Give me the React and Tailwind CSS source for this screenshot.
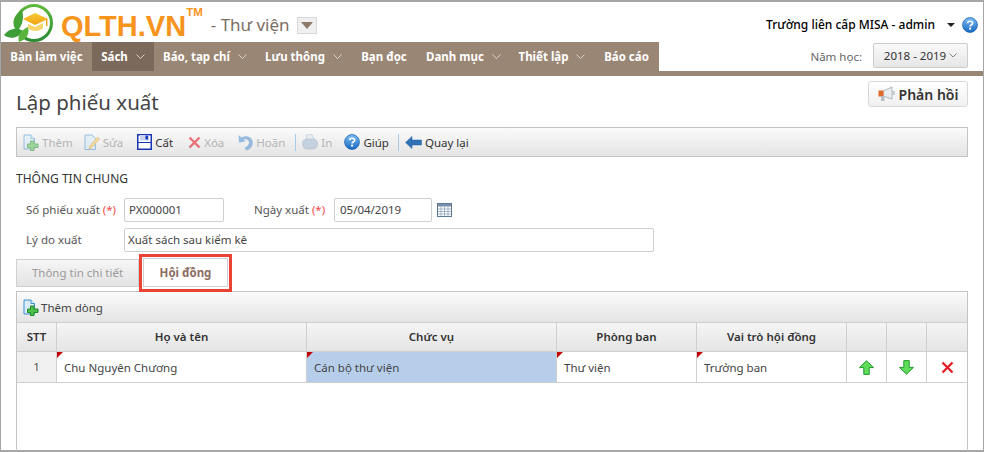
const font = { fontFamily: '"Noto Sans", sans-serif' };

const navItems = [
  { label: "Bàn làm việc", w: "w-[91px]" },
  { label: "Sách", w: "w-[62px]", caret: true, active: true },
  { label: "Báo, tạp chí", w: "w-[102px]", caret: true },
  { label: "Lưu thông", w: "w-[95px]", caret: true },
  { label: "Bạn đọc", w: "w-[66px]" },
  { label: "Danh mục", w: "w-[93px]", caret: true },
  { label: "Thiết lập", w: "w-[84px]", caret: true },
  { label: "Báo cáo", w: "w-[65px]" },
];

const Logo = () => (
  <svg width="53" height="42" viewBox="0 0 53 42">
    <defs>
      <linearGradient id="ring" x1="0" y1="0" x2="0" y2="1">
        <stop offset="0" stopColor="#5fb83c" />
        <stop offset="1" stopColor="#2b8c33" />
      </linearGradient>
      <linearGradient id="cap" x1="0" y1="0" x2="0" y2="1">
        <stop offset="0" stopColor="#f9c933" />
        <stop offset="1" stopColor="#f0a313" />
      </linearGradient>
    </defs>
    <circle cx="32" cy="21" r="17.5" fill="none" stroke="url(#ring)" strokeWidth="3" />
    <path d="M13 27 C9 19 13 12 20 8 C22 15 21 23 16 28 Z" fill="#46a336" />
    <path d="M2 33 C7 26 15 25 21 29 C17 36 8 38 2 33 Z" fill="#3d9d37" />
    <path d="M17 40 C15 33 19 28 26 25 C28 32 24 38 17 40 Z" fill="#5ab43f" />
    <path d="M33 11 L46 17 L33 23 L21 17 Z" fill="url(#cap)" />
    <path d="M26 22 L26 26 C29 30 38 30 41 26 L41 21 L33 25 Z" fill="#f7d56a" />
    <rect x="44" y="17" width="1.4" height="7" fill="#e89b12" />
  </svg>
);

const Caret = () => (
  <svg width="9" height="5" viewBox="0 0 9 5" className="ml-[8px] shrink-0">
    <path d="M0.5 0.5 L4.5 4.5 L8.5 0.5" fill="none" stroke="#e4dcd3" strokeWidth="0.9" />
  </svg>
);

const DocPlus = ({ dim }) => (
  <svg width="16" height="17" viewBox="0 0 16 17" className={dim ? "opacity-50" : ""}>
    <path d="M1 1 H8 L11.5 4.5 V15 H1 Z" fill="#d8ecfa" stroke="#3d8ed0" />
    <path d="M8 1 V4.5 H11.5" fill="#fff" stroke="#3d8ed0" />
    <path d="M7.5 7 H11 V10 H15 V13.5 H11 V16.5 H7.5 V13.5 H4.5 V10 H7.5 Z" fill="#4cc04a" stroke="#1f8a2a" />
  </svg>
);

const DocEdit = () => (
  <svg width="16" height="17" viewBox="0 0 16 17" className="opacity-50">
    <path d="M1 1 H8 L11.5 4.5 V15.5 H1 Z" fill="#d8ecfa" stroke="#3d8ed0" />
    <path d="M5.5 12.5 L13.5 3 L15.5 5 L7.5 14 L5 15 Z" fill="#f3c64a" stroke="#c49422" strokeWidth="0.7" />
  </svg>
);

const Floppy = () => (
  <svg width="15" height="16" viewBox="0 0 15 16">
    <rect x="0.75" y="0.75" width="13.5" height="14.5" fill="#fff" stroke="#1b36b5" strokeWidth="1.5" />
    <rect x="3" y="1" width="9" height="5.5" fill="#c9d4ee" />
    <rect x="8.5" y="1.5" width="2.5" height="4" fill="#1b36b5" />
    <rect x="1" y="8" width="13" height="1" fill="#1b36b5" />
  </svg>
);

const Cross = ({ size = 13, color = "#e3202a" }) => (
  <svg width={size} height={size} viewBox="0 0 13 13">
    <path d="M1.5 1.5 L11.5 11.5 M11.5 1.5 L1.5 11.5" stroke={color} strokeWidth="2.4" />
  </svg>
);

const Undo = () => (
  <svg width="15" height="17" viewBox="0 0 15 17" className="opacity-50">
    <path d="M0.5 1 L1 8.5 L7.5 7.5 L5.5 5.5 C8.5 4.5 11 6 11 8.5 C11 11 9 13 6.5 14 L8.5 16.5 C12.5 15.5 14.8 12 14.8 8.5 C14.8 3.5 9 0.5 3.5 3.5 Z" fill="#3f87cf" />
  </svg>
);

const Printer = () => (
  <svg width="16" height="16" viewBox="0 0 16 16" className="opacity-50">
    <path d="M4 1 L10 0.5 L12 5 L5 6 Z" fill="#dfe8f2" stroke="#8ca3bd" strokeWidth="0.7" />
    <path d="M0.5 9 C0.5 6 3 5 6 5 H11 C14 5 15.5 7 15.5 10 C15.5 13 13.5 15 10.5 15 H5 C2 15 0.5 12 0.5 9 Z" fill="#9fb6d2" stroke="#7f97b5" strokeWidth="0.7" />
  </svg>
);

const Help = ({ size = 16 }) => (
  <svg width={size} height={size} viewBox="0 0 16 16">
    <defs>
      <linearGradient id="helpfill" x1="0" y1="0" x2="0" y2="1">
        <stop offset="0" stopColor="#7fc0f4" />
        <stop offset="1" stopColor="#1667c4" />
      </linearGradient>
    </defs>
    <circle cx="8" cy="8" r="7.4" fill="url(#helpfill)" stroke="#1b5fae" strokeWidth="0.8" />
    <path d="M5.6 6.2 C5.6 3.6 10.6 3.6 10.6 6.2 C10.6 8 8.1 8 8.1 9.6" fill="none" stroke="#fff" strokeWidth="1.7" />
    <rect x="7.1" y="10.6" width="2" height="2" fill="#fff" />
  </svg>
);

const BackArrow = () => (
  <svg width="17" height="13" viewBox="0 0 17 13">
    <path d="M0.5 6.5 L7 0.5 V4 H16.5 V9 H7 V12.5 Z" fill="#2f72b8" stroke="#23609f" strokeWidth="0.5" />
  </svg>
);

const GreenArrow = ({ down }) => (
  <svg width="15" height="15" viewBox="0 0 15 15" className={down ? "rotate-180" : ""}>
    <path d="M7.5 0.8 L14.5 7.6 L10.2 7.6 V14.4 H4.8 V7.6 H0.5 Z" fill="#5fdc5a" stroke="#1e9a28" />
  </svg>
);

const Calendar = () => (
  <svg width="15" height="14" viewBox="0 0 15 14">
    <rect x="0.5" y="0.5" width="14" height="13" fill="#fff" stroke="#5f7896" />
    <rect x="1" y="1" width="13" height="2.5" fill="#7890ad" />
    <path d="M1 6 H14 M1 8.5 H14 M1 11 H14 M4 3.5 V13 M7.5 3.5 V13 M11 3.5 V13" stroke="#8ea3bc" strokeWidth="0.8" />
  </svg>
);

const Megaphone = () => (
  <svg width="18" height="16" viewBox="0 0 18 16">
    <path d="M5 5 L14 1 V13 L5 10 Z" fill="#e9edf0" stroke="#9aa5ad" strokeWidth="0.7" />
    <rect x="0.5" y="4.5" width="5" height="6" fill="#e0692c" />
    <rect x="3" y="10" width="3.5" height="5" fill="#b7c0c6" />
    <rect x="14" y="5" width="3" height="4" fill="#c7ced3" />
  </svg>
);

const ToolButton = ({ icon, label, dim, className = "" }) => (
  <div className={`flex items-center gap-[3px] ${className}`}>
    {icon}
    <span className={`pt-px ${dim ? "text-[#b4b4b4]" : "text-[#333]"}`}>{label}</span>
  </div>
);

const Divider = () => <div className="w-px h-[17px] bg-[#a9cbe6]" />;

const Marker = () => (
  <span className="absolute left-0 top-0 w-0 h-0 border-t-[6px] border-r-[6px] border-t-[#c00000] border-r-transparent" />
);

const HeadCell = ({ children }) => (
  <div className="flex items-center justify-center border-r border-[#cfcfcf] font-semibold text-[#333] last:border-r-0">
    {children}
  </div>
);

const BodyCell = ({ children, marked, className = "" }) => (
  <div className={`relative flex items-center pl-[7px] pt-px border-r border-[#cfcfcf] text-[#444] ${className}`}>
    {marked && <Marker />}
    {children}
  </div>
);

const IconCell = ({ children }) => (
  <div className="flex items-center justify-center border-r border-[#cfcfcf] last:border-r-0">{children}</div>
);

export default function App() {
  const grid = "grid grid-cols-[40px_250px_250px_140px_150px_40px_40px_41px]";
  return (
    <div style={font} className="w-[984px] h-[452px] overflow-hidden bg-white text-[11.5px] text-[#333]">
      <div className="h-[452px] border-t-2 border-l-[1px] border-r-[1px] border-b-[2px] border-[#a6a6a6]">
        {/* HEADER */}
        <div className="h-[40px] flex items-start">
          <div className="ml-[1px]"><Logo /></div>
          <div className="ml-[6px] mt-[6px] text-[#f7941d] font-bold text-[29px] leading-[36px]" style={{ fontFamily: '"Liberation Sans", sans-serif' }}>
            QLTH.VN
          </div>
          <div className="mt-[4px] text-[#f7941d] font-bold text-[11.5px] leading-[12px]" style={{ fontFamily: '"Liberation Sans", sans-serif' }}>
            TM
          </div>
          <div className="ml-[8px] mt-[10px] text-[17px] leading-[26px] text-[#7b6d62]">- Thư viện</div>
          <div className="ml-[7px] mt-[15px] w-[20px] h-[17px] bg-[#f0f0f0] border border-[#d8d8d8] flex items-center justify-center">
            <span className="w-0 h-0 border-x-[6px] border-x-transparent border-t-[7px] border-t-[#8b7a6c]" />
          </div>
          <div className="ml-auto mt-[14px] mr-[5px] flex items-center text-[12px] text-black font-medium">
            <span>Trường liên cấp MISA - admin</span>
            <span className="ml-[12px] mr-[7px] w-0 h-0 border-x-[4px] border-x-transparent border-t-[4px] border-t-[#222]" />
            <Help />
          </div>
        </div>

        {/* NAV */}
        <div className="h-[34px] bg-[#9a8674]">
          <div className="flex h-[29px]">
            {navItems.map((item) => (
              <div
                key={item.label}
                className={`${item.w} flex items-center justify-center font-bold text-white text-[11.5px] ${item.active ? "bg-[#7b6a5b]" : ""}`}
              >
                <span>{item.label}</span>
                {item.caret && <Caret />}
              </div>
            ))}
            <div className="flex-1 bg-white flex items-center justify-end pr-[15px]">
              <span className="text-[#666] mr-[11px]">Năm học:</span>
              <div className="w-[95px] h-[25px] mt-[-2px] flex items-center justify-center whitespace-nowrap bg-gradient-to-b from-[#fafafa] to-[#e6e6e6] border border-[#cccccc] rounded-[2px] text-[#333]">
                2018 - 2019
                <svg width="8" height="5" viewBox="0 0 8 5" className="ml-[3px]">
                  <path d="M0.5 0.5 L4 4 L7.5 0.5" fill="none" stroke="#777" strokeWidth="0.9" />
                </svg>
              </div>
            </div>
          </div>
        </div>

        {/* CONTENT */}
        <div className="px-[15px]">
          <div className="flex items-start justify-between h-[51px]">
            <h1 className="mt-[10px] text-[20.5px] leading-[32px] text-[#444]">Lập phiếu xuất</h1>
            <div className="mt-[5px] w-[100px] h-[26px] flex items-center justify-center gap-[3px] bg-gradient-to-b from-[#fff] to-[#f0f0f0] border border-[#d8d8d8] rounded-[3px] font-semibold text-[14px] text-[#333]">
              <Megaphone />
              <span>Phản hồi</span>
            </div>
          </div>

          {/* TOOLBAR */}
          <div className="h-[30px] flex items-center pl-[6px] border border-[#c4c4c4] bg-gradient-to-b from-[#fbfbfb] to-[#e4e4e4]">
            <ToolButton icon={<DocPlus dim />} label="Thêm" dim />
            <ToolButton icon={<DocEdit />} label="Sửa" dim className="ml-[11px]" />
            <ToolButton icon={<Floppy />} label="Cất" className="ml-[14px]" />
            <ToolButton icon={<span className="opacity-60"><Cross /></span>} label="Xóa" dim className="ml-[15px]" />
            <ToolButton icon={<Undo />} label="Hoãn" dim className="ml-[14px]" />
            <div className="ml-[10px]"><Divider /></div>
            <ToolButton icon={<Printer />} label="In" dim className="ml-[6px]" />
            <ToolButton icon={<Help />} label="Giúp" className="ml-[12px]" />
            <div className="ml-[9px]"><Divider /></div>
            <ToolButton icon={<BackArrow />} label="Quay lại" className="ml-[6px]" />
          </div>

          <div className="mt-[14px] h-[16px] leading-[16px] text-[12px] text-[#333]">THÔNG TIN CHUNG</div>

          {/* FORM */}
          <div className="mt-[11px] ml-[10px] flex items-center h-[24px]">
            <div className="w-[98px] text-[#555]">Số phiếu xuất <span className="text-[#ef4a4a]">(*)</span></div>
            <div className="w-[100px] h-[24px] flex items-center pl-[4px] border border-[#cfcfcf] rounded-[2px] text-[#444]">PX000001</div>
            <div className="ml-[30px] w-[80px] text-[#555] whitespace-nowrap">Ngày xuất <span className="text-[#ef4a4a]">(*)</span></div>
            <div className="w-[98px] h-[24px] flex items-center pl-[5px] border border-[#cfcfcf] rounded-[2px] text-[#444]">05/04/2019</div>
            <div className="ml-[5px]"><Calendar /></div>
          </div>
          <div className="mt-[6px] ml-[10px] flex items-center h-[24px]">
            <div className="w-[98px] text-[#555]">Lý do xuất</div>
            <div className="w-[530px] h-[24px] flex items-center pl-[3px] border border-[#cfcfcf] rounded-[2px] text-[#444]">Xuất sách sau kiểm kê</div>
          </div>

          {/* TABS */}
          <div className="mt-[6px] flex items-end h-[29px]">
            <div className="w-[123px] h-[28px] flex items-center justify-center border border-[#d0d0d0] bg-gradient-to-b from-[#f6f6f6] to-[#e3e3e3] text-[#9a9a9a]">Thông tin chi tiết</div>
            <div className="relative ml-[4px] w-[85px] h-[29px] flex items-center justify-center border border-[#cfcfcf] bg-white font-bold text-[#8d6e63]">
              Hội đồng
              <span className="absolute -left-[5px] -top-[5px] w-[93px] h-[38px] border-[3px] border-[#ea4335]" />
            </div>
          </div>

          {/* GRID PANEL */}
          <div className="mt-[4px] border-l border-r border-[#c4c4c4] h-[160px]">
            <div className="h-[31px] flex items-center pl-[6px] gap-[2px] border-t border-[#c4c4c4] bg-gradient-to-b from-[#fbfbfb] to-[#e4e4e4]">
              <DocPlus />
              <span className="pt-px text-[#444]">Thêm dòng</span>
            </div>
            <div className={`${grid} h-[30px] border-t border-b border-[#cfcfcf] bg-gradient-to-b from-[#f5f5f5] to-[#e5e5e5]`}>
              <HeadCell>STT</HeadCell>
              <HeadCell>Họ và tên</HeadCell>
              <HeadCell>Chức vụ</HeadCell>
              <HeadCell>Phòng ban</HeadCell>
              <HeadCell>Vai trò hội đồng</HeadCell>
              <HeadCell />
              <HeadCell />
              <HeadCell />
            </div>
            <div className={`${grid} h-[31px] border-b border-[#cfcfcf]`}>
              <div className="flex items-center justify-center bg-[#f0f0f0] border-r border-[#cfcfcf] text-[#555]">1</div>
              <BodyCell marked>Chu Nguyên Chương</BodyCell>
              <BodyCell marked className="bg-[#b7ceeb]">Cán bộ thư viện</BodyCell>
              <BodyCell marked>Thư viện</BodyCell>
              <BodyCell marked>Trưởng ban</BodyCell>
              <IconCell><GreenArrow /></IconCell>
              <IconCell><GreenArrow down /></IconCell>
              <IconCell><Cross /></IconCell>
            </div>
          </div>
        </div>
      </div>
    </div>
  );
}
